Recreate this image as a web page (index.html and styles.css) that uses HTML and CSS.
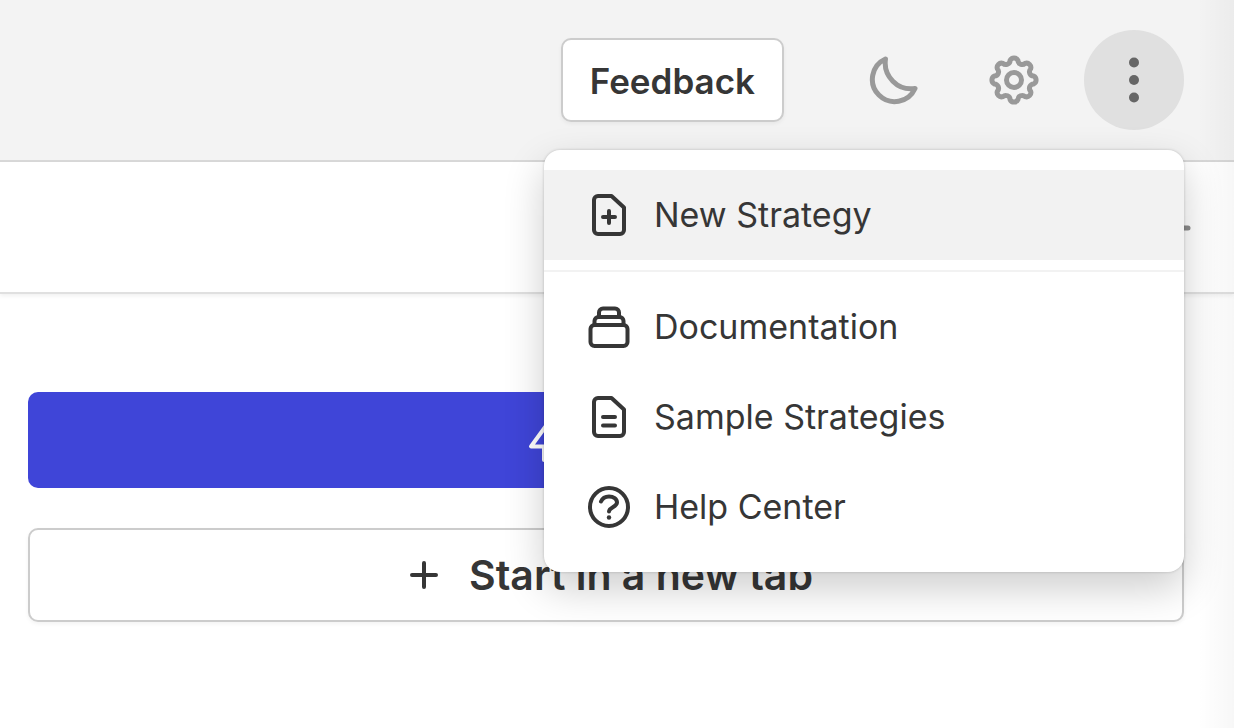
FILE: index.html
```html
<!DOCTYPE html>
<html lang="en">
<head>
    <meta charset="UTF-8">
    <meta name="viewport" content="width=device-width, initial-scale=1.0">
    <title>Strategies</title>
    <link rel="stylesheet" href="styles.css">
</head>
<body>

    <header class="header">
        <button type="button" class="btn feedback">Feedback</button>

        <div class="header-icons">
            <button type="button" class="icon-btn" aria-label="Dark mode">
                <svg class="icon" viewBox="0 0 50 50">
                    <path d="M16.500 4A22.300 22.300 0 1 0 46 33.500A26 26 0 0 1 16.500 4Z"/>
                </svg>
            </button>
            <button type="button" class="icon-btn" aria-label="Settings">
                <svg class="icon" viewBox="0 0 50 50">
                    <path d="M21.100 5.400A4.300 4.300 0 0 1 28.900 5.400A4.300 4.300 0 0 0 36.100 8.400A4.300 4.300 0 0 1 41.600 13.900A4.300 4.300 0 0 0 44.600 21.100A4.300 4.300 0 0 1 44.600 28.900A4.300 4.300 0 0 0 41.600 36.100A4.300 4.300 0 0 1 36.100 41.600A4.300 4.300 0 0 0 28.900 44.600A4.300 4.300 0 0 1 21.100 44.600A4.300 4.300 0 0 0 13.900 41.600A4.300 4.300 0 0 1 8.400 36.100A4.300 4.300 0 0 0 5.400 28.900A4.300 4.300 0 0 1 5.400 21.100A4.300 4.300 0 0 0 8.400 13.900A4.300 4.300 0 0 1 13.900 8.400A4.300 4.300 0 0 0 21.100 5.400Z"/>
                    <circle cx="25" cy="25" r="7.500"/>
                </svg>
            </button>

            <div class="more">
                <button type="button" class="icon-btn active" aria-label="More" aria-expanded="true">
                    <svg class="icon dots" viewBox="0 0 50 50">
                        <circle cx="25" cy="7.500" r="5"/>
                        <circle cx="25" cy="25" r="5"/>
                        <circle cx="25" cy="42.500" r="5"/>
                    </svg>
                </button>

                <nav class="menu">
                    <a class="menu-item selected" href="#new">
                        <svg class="icon" viewBox="0 0 50 50">
                            <path d="M14 6H27.500L40 17.500V40A4 4 0 0 1 36 44H14A4 4 0 0 1 10 40V10A4 4 0 0 1 14 6Z"/>
                            <path d="M25 21V33M19 27H31"/>
                        </svg>
                        New Strategy
                    </a>
                    <hr class="divider">
                    <a class="menu-item" href="#docs">
                        <svg class="icon" viewBox="0 0 50 50">
                            <rect x="6.500" y="23" width="37" height="21" rx="4"/>
                            <path d="M10.500 23V19A4 4 0 0 1 14.500 15H35.500A4 4 0 0 1 39.500 19V23"/>
                            <path d="M15 15V10.500A4 4 0 0 1 19 6.500H31A4 4 0 0 1 35 10.500V15"/>
                        </svg>
                        Documentation
                    </a>
                    <a class="menu-item" href="#samples">
                        <svg class="icon" viewBox="0 0 50 50">
                            <path d="M14 6H27.500L40 17.500V40A4 4 0 0 1 36 44H14A4 4 0 0 1 10 40V10A4 4 0 0 1 14 6Z"/>
                            <path d="M19 25H31M19 33.500H31"/>
                        </svg>
                        Sample Strategies
                    </a>
                    <a class="menu-item" href="#help">
                        <svg class="icon" viewBox="0 0 50 50">
                            <circle cx="25" cy="25" r="19"/>
                            <path d="M17 19.500C18.500 16 22 14.500 25 14.500C29.500 14.500 33 17 33 20.500C33 25 25 25.500 25 29.500"/>
                            <circle class="dot" cx="25" cy="35.500" r="2.200"/>
                        </svg>
                        Help Center
                    </a>
                </nav>
            </div>
        </div>
    </header>

    <div class="toolbar">
        <button type="button" class="collapse-btn" aria-label="Collapse">
            <svg class="icon" viewBox="0 0 50 50">
                <path d="M7 26H44"/>
            </svg>
        </button>
    </div>

    <main class="content">
        <button type="button" class="btn large primary" aria-label="Start">
            <svg class="icon" viewBox="0 0 50 50">
                <path d="M28 4L8 31.500H21V45L42 18.500H28Z"/>
            </svg>
        </button>
        <button type="button" class="btn large">
            <svg class="icon" viewBox="0 0 50 50">
                <path d="M25 13V37M13 25H37"/>
            </svg>
            Start in a new tab
        </button>
    </main>

</body>
</html>
```
FILE: styles.css
```css
* {
    box-sizing: border-box;
}

body {
    font-family: Inter, "Liberation Sans", sans-serif;
    font-size: 34px;
    line-height: 46px;
    color: #363636;
    background-color: #fff;
    margin: 0;
    min-height: 100vh;
    position: relative;
}

/* soft shade along the right edge of the panel */
body::after {
    content: "";
    position: absolute;
    top: 0;
    right: 0;
    bottom: 0;
    width: 36px;
    background: linear-gradient(to right, rgba(0, 0, 0, 0), rgba(0, 0, 0, 0.03));
    pointer-events: none;
}

button {
    font: inherit;
    color: inherit;
    cursor: pointer;
}

.icon {
    width: 50px;
    height: 50px;
    flex: none;
    fill: none;
    stroke: currentColor;
    stroke-width: 4;
    stroke-linecap: round;
    stroke-linejoin: round;
}

.header {
    display: flex;
    align-items: center;
    justify-content: flex-end;
    gap: 60px;
    padding: 30px 50px;
    background-color: #f3f3f3;
    border-bottom: 2px solid #d8d8d8;
}

.header-icons {
    display: flex;
    gap: 20px;
}

.btn {
    display: flex;
    align-items: center;
    justify-content: center;
    gap: 20px;
    font-weight: 600;
    background-color: #fff;
    border: 2px solid #ccc;
    border-radius: 10px;
    box-shadow: 0 2px 4px rgba(0, 0, 0, 0.05);
}

.feedback {
    padding: 18px 27px 16px;
    font-size: 35px;
}

.icon-btn {
    display: flex;
    align-items: center;
    justify-content: center;
    width: 100px;
    height: 100px;
    padding: 0;
    color: #999;
    background: none;
    border: none;
    border-radius: 50%;
}

.icon-btn .icon,
.collapse-btn .icon {
    stroke-width: 5;
}

.icon-btn.active {
    color: #666;
    background-color: #e0e0e0;
}

.icon-btn .dots,
.dot {
    fill: currentColor;
    stroke: none;
}

.more {
    position: relative;
}

.menu {
    position: absolute;
    top: 120px;
    right: 0;
    z-index: 1;
    width: 640px;
    padding: 20px 0;
    background-color: #fff;
    border-radius: 16px;
    box-shadow: 0 0 3px rgba(0, 0, 0, 0.2), 0 16px 40px rgba(0, 0, 0, 0.2);
}

.menu-item {
    display: flex;
    align-items: center;
    gap: 20px;
    padding: 20px 40px;
    color: inherit;
    text-decoration: none;
}

.menu-item.selected {
    background-color: #f2f2f2;
}

.divider {
    margin: 10px 0;
    border: none;
    border-top: 2px solid #f2f2f2;
}

.toolbar {
    display: flex;
    justify-content: flex-end;
    padding: 40px;
    border-bottom: 2px solid #e0e0e0;
    box-shadow: 0 2px 4px rgba(0, 0, 0, 0.06);
}

.collapse-btn {
    display: flex;
    padding: 0;
    color: #8c8c8c;
    background: none;
    border: none;
}

.content {
    display: flex;
    flex-direction: column;
    gap: 40px;
    padding: 98px 50px 50px 28px;
}

.btn.large {
    padding: 20px;
    font-size: 41px;
}

.btn.primary {
    padding: 23px 140px 23px 24px;
    color: #fff;
    background-color: #3f45d8;
    border: none;
    box-shadow: none;
}
```
